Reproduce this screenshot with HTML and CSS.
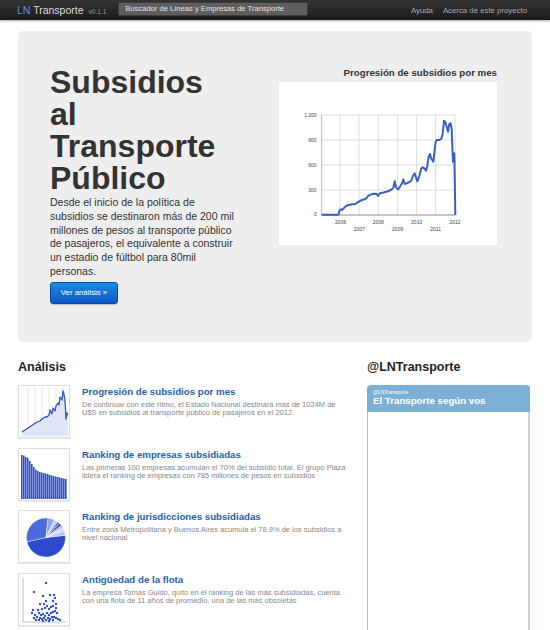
FILE: index.html
```html
<!DOCTYPE html>
<html lang="es">
<head>
<meta charset="utf-8">
<title>LN Transporte</title>
<link rel="stylesheet" href="styles.css">
</head>
<body>
<header class="navbar">
  <div class="brand"><span class="ln">LN</span> Transporte</div>
  <span class="version">v0.1.1</span>
  <div class="search">Buscador de Líneas y Empresas de Transporte</div>
  <nav class="nav-links">
    <span>Ayuda</span>
    <span>Acerca de este proyecto</span>
  </nav>
</header>

<main class="container">
  <section class="hero">
    <div class="hero-text">
      <h1>Subsidios al Transporte Público</h1>
      <p>Desde el inicio de la política de subsidios se destinaron más de 200 mil millones de pesos al transporte público de pasajeros, el equivalente a construir un estadio de fúltbol para 80mil personas.</p>
      <a class="btn">Ver análisis »</a>
    </div>
    <div class="hero-chart">
      <div class="chart-title">Progresión de subsidios por mes</div>
      <div class="chart-box">
        <svg width="218" height="163" viewBox="27 66 654 489">
          <g stroke="#cccccc" stroke-width="2">
            <line x1="155" y1="165" x2="555" y2="165"/>
            <line x1="155" y1="240" x2="555" y2="240"/>
            <line x1="155" y1="315" x2="555" y2="315"/>
            <line x1="155" y1="390" x2="555" y2="390"/>
            <line x1="210" y1="165" x2="210" y2="464"/>
            <line x1="267" y1="165" x2="267" y2="464"/>
            <line x1="325" y1="165" x2="325" y2="464"/>
            <line x1="383" y1="165" x2="383" y2="464"/>
            <line x1="440" y1="165" x2="440" y2="464"/>
            <line x1="497" y1="165" x2="497" y2="464"/>
            <line x1="555" y1="165" x2="555" y2="464"/>
          </g>
          <line x1="155" y1="165" x2="155" y2="465" stroke="#999" stroke-width="2"/>
          <line x1="155" y1="465" x2="555" y2="465" stroke="#555" stroke-width="2"/>
          <g font-family="Liberation Sans, Arial, sans-serif" font-size="15" fill="#444" text-anchor="end">
            <text x="140" y="170">1.200</text>
            <text x="140" y="245">900</text>
            <text x="140" y="320">600</text>
            <text x="140" y="395">300</text>
            <text x="140" y="469">0</text>
          </g>
          <g font-family="Liberation Sans, Arial, sans-serif" font-size="15" fill="#444" text-anchor="middle">
            <text x="212" y="493">2006</text>
            <text x="268" y="513">2007</text>
            <text x="325" y="493">2008</text>
            <text x="383" y="513">2009</text>
            <text x="440" y="493">2010</text>
            <text x="497" y="513">2011</text>
            <text x="555" y="493">2012</text>
          </g>
          <polyline fill="none" stroke="#3a5fc4" stroke-width="6" stroke-linejoin="round" points="155,464 205,464 208,452 212,448 216,450 220,446 226,440 232,436 240,434 248,433 256,432 262,428 268,424 276,420 284,418 290,414 296,406 304,403 312,401 320,402 324,408 330,400 338,398 346,396 354,394 362,390 370,384 374,364 378,382 384,388 390,380 396,370 400,358 404,372 410,370 418,366 424,362 430,345 434,340 438,352 442,364 448,348 454,325 458,322 464,326 468,332 472,318 476,290 480,282 484,296 490,305 494,270 497,245 500,240 508,240 514,236 518,222 522,182 526,186 530,200 534,215 538,192 542,190 545,205 547,260 549,305 551,285 553,280 556,465"/>
        </svg>
      </div>
    </div>
  </section>

  <div class="lower">
    <section class="analysis">
      <h2>Análisis</h2>

      <article class="item">
        <div class="thumb">
          <svg width="48" height="49" viewBox="0 0 48 49">
            <g stroke="#d4d4d4" stroke-width="0.6">
              <line x1="8" y1="0" x2="8" y2="49"/>
              <line x1="15" y1="0" x2="15" y2="49"/>
              <line x1="22" y1="0" x2="22" y2="49"/>
              <line x1="29" y1="0" x2="29" y2="49"/>
              <line x1="36" y1="0" x2="36" y2="49"/>
              <line x1="43" y1="0" x2="43" y2="49"/>
            </g>
            <polygon fill="#dfe6f7" points="2,45 5,43 8,41 11,39 14,37 17,35 20,34 22,32 25,30 27,30 29,28 30,23 32,27 33,21 35,24 36,19 38,16 39,18 40,10 42,13 43,4 44,7 45,14 46,32 47,26 48,28 48,49 2,49"/>
            <polyline fill="none" stroke="#2f53c4" stroke-width="1.3" stroke-linejoin="round" points="2,45 5,43 8,41 11,39 14,37 17,35 20,34 22,32 25,30 27,30 29,28 30,23 32,27 33,21 35,24 36,19 38,16 39,18 40,10 42,13 43,4 44,7 45,14 46,32 47,26 48,28"/>
          </svg>
        </div>
        <div class="item-body">
          <h3>Progresión de subsidios por mes</h3>
          <p>De continuar con este ritmo, el Estado Nacional destinará más de 1024M de U$S en subsidios al transporte público de pasajeros en el 2012.</p>
        </div>
      </article>

      <article class="item">
        <div class="thumb">
          <svg width="48" height="49" viewBox="0 0 48 49">
            <g fill="#2f4fcf">
              <rect x="1" y="5" width="1.6" height="44"/>
              <rect x="3" y="5.5" width="1.6" height="43.5"/>
              <rect x="5" y="7" width="1.6" height="42"/>
              <rect x="7" y="8" width="1.6" height="41"/>
              <rect x="9" y="11" width="1.6" height="38"/>
              <rect x="11" y="14" width="1.6" height="35"/>
              <rect x="13" y="17" width="1.6" height="32"/>
              <rect x="15" y="19.5" width="1.6" height="29.5"/>
              <rect x="17" y="21" width="1.6" height="28"/>
              <rect x="19" y="22" width="1.6" height="27"/>
              <rect x="21" y="22.5" width="1.6" height="26.5"/>
              <rect x="23" y="23" width="1.6" height="26"/>
              <rect x="25" y="23.5" width="1.6" height="25.5"/>
              <rect x="27" y="24" width="1.6" height="25"/>
              <rect x="29" y="25" width="1.6" height="24"/>
              <rect x="31" y="25.5" width="1.6" height="23.5"/>
              <rect x="33" y="26" width="1.6" height="23"/>
              <rect x="35" y="26.5" width="1.6" height="22.5"/>
              <rect x="37" y="27" width="1.6" height="22"/>
              <rect x="39" y="27.5" width="1.6" height="21.5"/>
              <rect x="41" y="28" width="1.6" height="21"/>
              <rect x="43" y="28.5" width="1.6" height="20.5"/>
              <rect x="45" y="29" width="1.6" height="20"/>
            </g>
          </svg>
        </div>
        <div class="item-body">
          <h3>Ranking de empresas subsidiadas</h3>
          <p>Las primeras 100 empresas acumulan el 70% del subsidio total. El grupo Plaza lidera el ranking de empresas con 785 millones de pesos en subsidios</p>
        </div>
      </article>

      <article class="item">
        <div class="thumb">
          <svg width="48" height="49" viewBox="0 0 48 49">
            <g stroke="#ffffff" stroke-width="0.4">
              <path fill="#2c4acb" d="M26,25.5 L45.37,23.29 A19.5,19.5 0 0 1 6.95,29.69 Z"/>
              <path fill="#4a6bdc" d="M26,25.5 L6.95,29.69 A19.5,19.5 0 0 1 28.04,6.11 Z"/>
              <path fill="#8ea4ea" d="M26,25.5 L28.04,6.11 A19.5,19.5 0 0 1 34.55,7.97 Z"/>
              <path fill="#c5d1f5" d="M26,25.5 L34.55,7.97 A19.5,19.5 0 0 1 37.46,9.72 Z"/>
              <path fill="#5c7ce0" d="M26,25.5 L37.46,9.72 A19.5,19.5 0 0 1 39.55,11.47 Z"/>
              <path fill="#2a48c8" d="M26,25.5 L39.55,11.47 A19.5,19.5 0 0 1 41.37,13.49 Z"/>
              <path fill="#aab9ef" d="M26,25.5 L41.37,13.49 A19.5,19.5 0 0 1 42.89,15.75 Z"/>
              <path fill="#d6def8" d="M26,25.5 L42.89,15.75 A19.5,19.5 0 0 1 44.32,18.83 Z"/>
              <path fill="#b8c6f2" d="M26,25.5 L44.32,18.83 A19.5,19.5 0 0 1 45.37,23.29 Z"/>
            </g>
          </svg>
        </div>
        <div class="item-body">
          <h3>Ranking de jurisdicciones subsidiadas</h3>
          <p>Entre zona Metropolitana y Buenos Aires acumula el 78.9% de los subsidios a nivel nacional</p>
        </div>
      </article>

      <article class="item">
        <div class="thumb">
          <svg width="48" height="49" viewBox="0 0 48 49">
            <g stroke="#9a9a9a" stroke-width="0.6">
              <line x1="3" y1="3" x2="3" y2="47"/>
              <line x1="3" y1="47" x2="46" y2="47"/>
            </g>
            <g fill="#2f4fc8">
              <circle cx="26" cy="8" r="1.2"/><circle cx="30" cy="20" r="1.2"/><circle cx="14" cy="17" r="1.2"/>
              <circle cx="23" cy="21" r="1.2"/><circle cx="34" cy="20" r="1.2"/><circle cx="33" cy="26" r="1.2"/>
              <circle cx="26" cy="26" r="1.2"/><circle cx="20" cy="29" r="1.2"/><circle cx="27" cy="31" r="1.2"/>
              <circle cx="35" cy="23" r="1.2"/><circle cx="36" cy="29" r="1.2"/><circle cx="18" cy="35" r="1.2"/>
              <circle cx="22" cy="34" r="1.2"/><circle cx="25" cy="33" r="1.2"/><circle cx="29" cy="34" r="1.2"/>
              <circle cx="31" cy="32" r="1.2"/><circle cx="33" cy="31" r="1.2"/><circle cx="36" cy="33" r="1.2"/>
              <circle cx="12" cy="38" r="1.2"/><circle cx="15" cy="40" r="1.2"/><circle cx="19" cy="38" r="1.2"/>
              <circle cx="21" cy="40" r="1.2"/><circle cx="23" cy="39" r="1.2"/><circle cx="25" cy="41" r="1.2"/>
              <circle cx="27" cy="38" r="1.2"/><circle cx="29" cy="40" r="1.2"/><circle cx="31" cy="38" r="1.2"/>
              <circle cx="33" cy="37" r="1.2"/><circle cx="35" cy="36" r="1.2"/><circle cx="37" cy="38" r="1.2"/>
              <circle cx="14" cy="43" r="1.2"/><circle cx="17" cy="42" r="1.2"/><circle cx="20" cy="43" r="1.2"/>
              <circle cx="22" cy="44" r="1.2"/><circle cx="24" cy="43" r="1.2"/><circle cx="26" cy="45" r="1.2"/>
              <circle cx="28" cy="43" r="1.2"/><circle cx="30" cy="44" r="1.2"/><circle cx="32" cy="42" r="1.2"/>
              <circle cx="34" cy="42" r="1.2"/><circle cx="36" cy="43" r="1.2"/><circle cx="38" cy="44" r="1.2"/>
              <circle cx="40" cy="45" r="1.2"/><circle cx="16" cy="45" r="1.2"/><circle cx="19" cy="45" r="1.2"/>
              <circle cx="23" cy="46" r="1.2"/><circle cx="29" cy="46" r="1.2"/><circle cx="33" cy="45" r="1.2"/>
              <circle cx="13" cy="35" r="1.2"/><circle cx="24" cy="29" r="1.2"/>
            </g>
          </svg>
        </div>
        <div class="item-body">
          <h3>Antigüedad de la flota</h3>
          <p>La empresa Tomas Guido, quito en el ranking de las más subsidiadas, cuenta con una flota de 11 años de promedio, una de las más obsoletas</p>
        </div>
      </article>
    </section>

    <aside class="twitter">
      <h2>@LNTransporte</h2>
      <div class="widget">
        <div class="widget-head">
          <div class="w-user">@LNTransporte</div>
          <div class="w-title">El Transporte según vos</div>
        </div>
        <div class="widget-body"></div>
      </div>
    </aside>
  </div>
</main>
</body>
</html>
```

FILE: styles.css
```css
* { box-sizing: border-box; }

body {
  margin: 0;
  background: #ffffff;
  color: #333333;
  font-family: "Liberation Sans", Arial, Helvetica, sans-serif;
  overflow: hidden;
}

/* Navbar */
.navbar {
  height: 20px;
  display: flex;
  align-items: center;
  padding: 0 23px 0 17px;
  background: linear-gradient(#333333, #1b1b1b);
  box-shadow: 0 1px 2px rgba(0, 0, 0, 0.35);
}

.brand {
  font-size: 10.5px;
  color: #dddddd;
  white-space: nowrap;
}

.brand .ln { color: #5b93d6; }

.version {
  font-size: 6.5px;
  color: #999999;
  margin-left: 5px;
  padding-top: 2px;
}

.search {
  margin-left: 12px;
  width: 190px;
  height: 14px;
  background: #5e5e5e;
  border: 1px solid #3e3e3e;
  border-radius: 2px;
  color: #e4e4e4;
  font-size: 7.6px;
  line-height: 11px;
  padding-left: 6px;
  white-space: nowrap;
  overflow: hidden;
  margin-top: -2px;
}

.nav-links {
  margin-left: auto;
  display: flex;
  gap: 10px;
  font-size: 7.8px;
  color: #aaaaaa;
}

/* Layout */
.container {
  padding: 0 18px;
}

.hero {
  margin-top: 11px;
  height: 311px;
  background: #eeeeee;
  border-radius: 5px;
  padding: 35px 35px 0 32px;
  display: flex;
  justify-content: space-between;
}

.hero-text { width: 192px; }

.hero h1 {
  margin: 0;
  width: 176px;
  font-size: 32px;
  line-height: 32px;
  font-weight: bold;
  color: #333333;
}

.hero p {
  margin: 2px 0 0;
  width: 188px;
  font-size: 10.5px;
  line-height: 13.8px;
  color: #333333;
}

.btn {
  display: block;
  margin-top: 3px;
  width: 68px;
  height: 22px;
  border-radius: 3px;
  background: linear-gradient(#1a8ce0, #0a56c6);
  border: 1px solid #0a48a8;
  color: #ffffff;
  font-size: 7.8px;
  line-height: 20px;
  text-align: center;
  box-shadow: 0 1px 1px rgba(0, 0, 0, 0.2);
}

.hero-chart { width: 218px; }

.chart-title {
  margin-top: 1px;
  text-align: right;
  font-size: 9.7px;
  line-height: 12px;
  font-weight: bold;
  color: #333333;
  white-space: nowrap;
}

.chart-box {
  margin-top: 3px;
  width: 218px;
  height: 163px;
  background: #ffffff;
}

.chart-box svg { display: block; }

/* Lower section */
.lower {
  display: flex;
  margin-top: 17px;
}

.lower h2 {
  margin: 0 0 10px;
  font-size: 12.5px;
  line-height: 16px;
  font-weight: bold;
  color: #222222;
}

.analysis { width: 332px; }

.item {
  display: flex;
  gap: 12px;
  margin-bottom: 9.5px;
}

.thumb {
  flex: none;
  width: 52px;
  height: 53px;
  padding: 1px;
  border: 1px solid #dddddd;
  background: #ffffff;
  box-shadow: 0 1px 1px rgba(0, 0, 0, 0.08);
}

.thumb svg { display: block; }

.item-body h3 {
  margin: 1px 0 0;
  font-size: 9.7px;
  line-height: 12px;
  font-weight: bold;
  color: #2462ae;
}

.item-body p {
  margin: 3px 0 0;
  font-size: 7.5px;
  line-height: 8px;
  color: #888888;
}

.twitter {
  width: 163px;
  margin-left: 17px;
}

.widget { margin-top: 1px; }

.widget-head {
  height: 27px;
  background: #7db0d7;
  border-radius: 4px 4px 0 0;
  padding: 4px 6px 0;
  color: #ffffff;
}

.w-user {
  font-size: 5px;
  line-height: 6px;
}

.w-title {
  font-size: 9.7px;
  line-height: 12px;
  font-weight: bold;
}

.widget-body {
  height: 240px;
  background: #ffffff;
  border-left: 1px solid #a9c2d6;
  border-right: 2px solid #c7d1d6;
}
```
